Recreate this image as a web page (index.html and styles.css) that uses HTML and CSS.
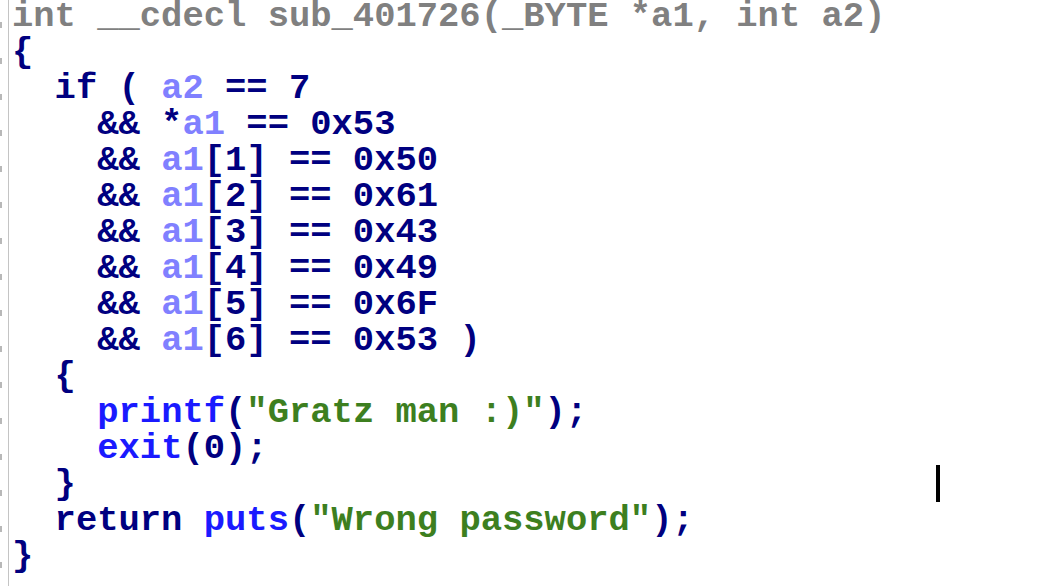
FILE: index.html
```html
<!DOCTYPE html>
<html>
<head>
<meta charset="utf-8">
<link rel="stylesheet" href="styles.css">
</head>
<body>
<div class="view">
  <div class="gutter">
    <div class="tick"></div><div class="tick"></div><div class="tick"></div><div class="tick"></div>
    <div class="tick"></div><div class="tick"></div><div class="tick"></div><div class="tick"></div>
    <div class="tick"></div><div class="tick"></div><div class="tick"></div><div class="tick"></div>
    <div class="tick"></div><div class="tick"></div><div class="tick"></div><div class="tick"></div>
  </div>
  <pre class="code"><span class="hdr">int __cdecl sub_401726(_BYTE *a1, int a2)</span>
<span class="kw">{</span>
<span class="kw">  if ( </span><span class="var">a2</span><span class="kw"> == 7</span>
<span class="kw">    &amp;&amp; *</span><span class="var">a1</span><span class="kw"> == 0x53</span>
<span class="kw">    &amp;&amp; </span><span class="var">a1</span><span class="kw">[1] == 0x50</span>
<span class="kw">    &amp;&amp; </span><span class="var">a1</span><span class="kw">[2] == 0x61</span>
<span class="kw">    &amp;&amp; </span><span class="var">a1</span><span class="kw">[3] == 0x43</span>
<span class="kw">    &amp;&amp; </span><span class="var">a1</span><span class="kw">[4] == 0x49</span>
<span class="kw">    &amp;&amp; </span><span class="var">a1</span><span class="kw">[5] == 0x6F</span>
<span class="kw">    &amp;&amp; </span><span class="var">a1</span><span class="kw">[6] == 0x53 )</span>
<span class="kw">  {</span>
<span class="kw">    </span><span class="fn">printf</span><span class="kw">(</span><span class="str">"Gratz man :)"</span><span class="kw">);</span>
<span class="kw">    </span><span class="fn">exit</span><span class="kw">(0);</span>
<span class="kw">  }</span>
<span class="kw">  return </span><span class="fn">puts</span><span class="kw">(</span><span class="str">"Wrong password"</span><span class="kw">);</span>
<span class="kw">}</span></pre>
  <div class="caret"></div>
</div>
</body>
</html>
```

FILE: styles.css
```css
html, body {
  margin: 0;
  padding: 0;
  background: #ffffff;
}
.view {
  position: relative;
  display: flex;
  width: 1042px;
  height: 586px;
  overflow: hidden;
}
.gutter {
  width: 9px;
  flex: none;
  box-sizing: border-box;
  border-right: 1px solid #c4c4c4;
  padding-top: 22px;
  display: flex;
  flex-direction: column;
  gap: 30px;
}
.tick {
  width: 2px;
  height: 6px;
  background: #b8b8b8;
}
.code {
  margin: -1px 0 0 0;
  padding-left: 3px;
  font-family: "Liberation Mono", "Courier New", monospace;
  font-weight: bold;
  font-size: 35.5px;
  line-height: 36px;
  white-space: pre;
}
.hdr { color: #808080; }
.kw { color: #000080; }
.var { color: #8080ff; }
.fn { color: #1a1aff; }
.str { color: #3d7f1f; }
.caret {
  position: absolute;
  left: 936px;
  top: 465px;
  width: 4px;
  height: 37px;
  background: #000000;
}
```
